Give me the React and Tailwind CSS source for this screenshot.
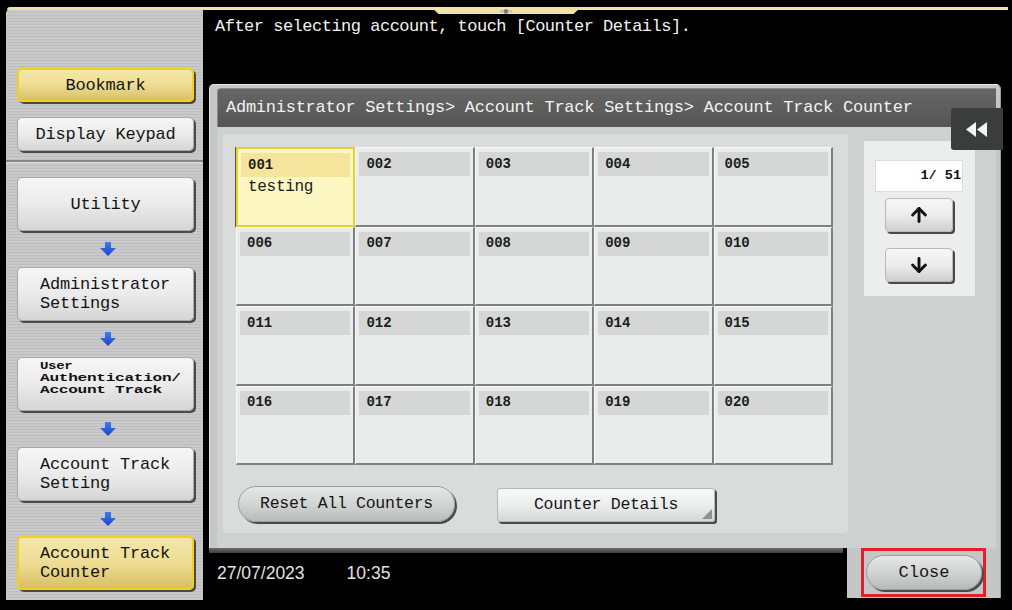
import React from "react";
import { ArrowUp, ArrowDown } from "lucide-react";

function SideBtn({ yellow, className = "", children }) {
  const skin = yellow
    ? "bg-linear-to-b from-[#f3e7a8] via-[#eedd93] to-[#d9c066] border-2 border-[#f0d21c]"
    : "bg-linear-to-b from-[#f6f6f6] via-[#ebebeb] to-[#d5d5d5] border border-[#a8a8a8]";
  return (
    <div
      className={`${skin} rounded-[5px] shadow-[2px_2px_0_#4a4a4a] text-[#141414] text-[17px] tracking-[-0.2px] leading-[19px] flex ${className}`}
    >
      {children}
    </div>
  );
}

function BlueArrow({ h = "h-[36px]" }) {
  return (
    <div className={`${h} flex items-center justify-center pl-[5px]`}>
      <svg width="16" height="14" viewBox="0 0 16 14">
        <defs>
          <linearGradient id="ba" x1="0" y1="0" x2="0" y2="1">
            <stop offset="0" stopColor="#3f7bf0" />
            <stop offset="1" stopColor="#1646c8" />
          </linearGradient>
        </defs>
        <path d="M5 0h6v6h5l-8 8-8-8h5z" fill="url(#ba)" />
      </svg>
    </div>
  );
}

function Sidebar() {
  return (
    <div className="ml-[6px] w-[197px] h-[590px] bg-[repeating-linear-gradient(180deg,#c9c9c9_0px,#c9c9c9_2px,#bebebe_2px,#bebebe_3px)] flex flex-col pl-[11px] pr-[9px] rounded-tl-[3px]">
      <div className="h-[58px] shrink-0" />
      <SideBtn yellow className="h-[34px] items-center justify-center shrink-0">
        Bookmark
      </SideBtn>
      <div className="h-[15px] shrink-0" />
      <SideBtn className="h-[34px] items-center justify-center shrink-0">
        Display Keypad
      </SideBtn>
      <div className="mt-[9px] -ml-[11px] -mr-[9px] h-[2px] bg-[#858585] shrink-0" />
      <div className="h-[1px] -ml-[11px] -mr-[9px] bg-[#dedede] shrink-0" />
      <div className="h-[14px] shrink-0" />
      <SideBtn className="h-[54px] items-center justify-center shrink-0">
        Utility
      </SideBtn>
      <BlueArrow />
      <SideBtn className="h-[54px] flex-col justify-center pl-[22px] shrink-0">
        <span>Administrator</span>
        <span>Settings</span>
      </SideBtn>
      <BlueArrow />
      <SideBtn className="h-[54px] flex-col pl-[22px] pt-[3px] shrink-0 overflow-hidden">
        <div className="origin-left scale-x-[1.4] font-bold tracking-[-0.2px] text-[#111]">
          <div className="text-[10px] leading-[11px]">User</div>
          <div className="text-[11.5px] leading-[11.5px]">Authentication/</div>
          <div className="text-[11.5px] leading-[11.5px]">Account Track</div>
        </div>
      </SideBtn>
      <BlueArrow />
      <SideBtn className="h-[54px] flex-col justify-center pl-[22px] shrink-0">
        <span>Account Track</span>
        <span>Setting</span>
      </SideBtn>
      <BlueArrow h="h-[35px]" />
      <SideBtn yellow className="h-[54px] flex-col justify-center pl-[21px] shrink-0">
        <span>Account Track</span>
        <span>Counter</span>
      </SideBtn>
    </div>
  );
}

function Cell({ n, sel }) {
  const skin = sel
    ? "bg-[#fdf7c2] border-2 border-[#e8cf30] shadow-[-1px_0_0_#555]"
    : "bg-[#e9eceb] border-solid border-t border-l border-r-2 border-b-2 border-t-[#f8f9f9] border-l-[#f8f9f9] border-r-[#7c807f] border-b-[#7c807f]";
  return (
    <div className={`${skin} flex flex-col`}>
      <div
        className={`mx-[3px] mt-[4px] h-[24px] ${
          sel ? "bg-[#f5e49c]" : "bg-[#d4d7d6]"
        } pl-[7px] flex items-center text-[14px] font-bold text-[#1c1c1c]`}
      >
        {n}
      </div>
      {sel && (
        <div className="pl-[10px] mt-[1px] text-[16px] leading-[18px] text-[#1a1a1a] tracking-[-0.3px]">
          testing
        </div>
      )}
    </div>
  );
}

function ArrowBtn({ up, className = "" }) {
  return (
    <div
      className={`w-[68px] h-[34px] rounded-[4px] bg-linear-to-b from-[#f7f7f7] via-[#ececec] to-[#cfcfcf] border border-[#b8b8b8] shadow-[2px_2px_0_#4a4a4a] flex items-center justify-center ${className}`}
    >
      {up ? (
        <ArrowUp size={22} strokeWidth={3.2} color="#111" />
      ) : (
        <ArrowDown size={22} strokeWidth={3.2} color="#111" />
      )}
    </div>
  );
}

export default function App() {
  const nums = Array.from({ length: 20 }, (_, i) => String(i + 1).padStart(3, "0"));
  return (
    <div className="w-[1012px] h-[610px] bg-black relative overflow-hidden pt-[7px] font-['Liberation_Mono',monospace]">
      {/* top yellow line */}
      <div className="h-[3px] ml-[7px] mr-[4px] bg-[#efe4a4] rounded-tl-[3px]" />
      <div className="absolute top-[7px] left-[431px] w-[150px] h-[7px] bg-[#efe4a4] [clip-path:polygon(0_0,100%_0,95%_100%,5%_100%)] flex items-center justify-center text-[6px] leading-none text-[#7a7a7a] font-['DejaVu_Sans',sans-serif]">
        «●»
      </div>

      <div className="flex h-[590px]">
        <Sidebar />
        <div className="ml-[6px] w-[803px] flex flex-col">
          {/* message */}
          <div className="h-[74px] pt-[7px] pl-[6px] text-[17px] leading-[20px] tracking-[-0.5px] text-[#f2f2f2]">
            After selecting account, touch [Counter Details].
          </div>

          {/* panel */}
          <div className="w-[792px] h-[514px] flex flex-col">
            <div className="bg-[#c3c7c6] rounded-t-[5px] pt-[3px] pl-[7px] pr-[4px] border-t border-l border-r border-[#e4e6e5] border-r-[#9a9e9d]">
              <div className="h-[39px] bg-linear-to-b from-[#666] to-[#555] rounded-tl-[4px] border-t border-l border-[#8a8a8a] flex items-center pl-[8px] text-[17px] tracking-[-0.25px] text-[#f2f2f2] whitespace-nowrap">
                Administrator Settings&gt; Account Track Settings&gt; Account Track Counter
              </div>
              <div className="h-[421px] bg-[#cdd1d0] flex items-start">
                <div className="ml-[6px] mt-[7px] w-[625px] h-[399px] bg-[#d9dcdb] rounded-[4px] pl-[13px] pt-[13px] flex flex-col">
                  <div className="grid grid-cols-[repeat(5,119.4px)] grid-rows-[repeat(4,79.5px)] w-[597px]">
                    {nums.map((n, i) => (
                      <Cell key={n} n={n} sel={i === 0} />
                    ))}
                  </div>
                  <div className="flex items-start mt-[21px]">
                    <div className="ml-[2px] w-[217px] h-[36px] rounded-full bg-linear-to-b from-[#e6e8e7] via-[#d2d5d4] to-[#b8bcbb] border border-[#9a9e9d] shadow-[2px_2px_0_#4a4a4a] flex items-center justify-center text-[16.5px] tracking-[-0.3px] text-[#151515]">
                      Reset All Counters
                    </div>
                    <div className="relative ml-[42px] mt-[2px] w-[218px] h-[34px] rounded-[3px] bg-linear-to-b from-[#f8f9f9] via-[#eceeed] to-[#d6d8d7] border border-[#b4b8b7] shadow-[2px_2px_0_#4a4a4a] flex items-center justify-center text-[16.5px] tracking-[-0.3px] text-[#151515]">
                      Counter Details
                      <svg
                        className="absolute right-[2px] bottom-[2px]"
                        width="10"
                        height="10"
                        viewBox="0 0 10 10"
                      >
                        <path d="M10 0V10H0z" fill="#8e9291" />
                      </svg>
                    </div>
                  </div>
                </div>

                <div className="ml-[16px] mt-[14px] w-[111px] h-[155px] bg-[#eceeed] flex flex-col items-start">
                  <div className="ml-[11px] mt-[19px] w-[88px] h-[32px] bg-white border border-[#dcdcdc] flex items-center justify-end pr-[1px] text-[13.5px] font-bold text-[#111] whitespace-pre">
                    1/ 51
                  </div>
                  <ArrowBtn up className="ml-[21px] mt-[6px]" />
                  <ArrowBtn className="ml-[21px] mt-[16px]" />
                </div>
              </div>
            </div>

            {/* bottom row */}
            <div className="flex h-[50px]">
              <div className="w-[638px] bg-black flex flex-col">
                <div className="h-[5px] w-[634px] bg-linear-to-b from-[#6a6d6c] to-[#3e4040]" />
                <div className="flex pl-[8px] pt-[10px] text-[17.5px] leading-[20px] text-[#e2e2e2] font-['Liberation_Sans',Arial,sans-serif]">
                  <span>27/07/2023</span>
                  <span className="ml-[42px]">10:35</span>
                </div>
              </div>
              <div className="w-[154px] h-[50px] bg-[#c3c7c6] border-r border-[#9a9e9d] pl-[14px]">
                <div className="w-[125px] h-[49px] border-[3px] border-[#e0202a] pl-[2px] pt-[4px]">
                  <div className="w-[116px] h-[35px] rounded-full bg-linear-to-b from-[#e6e8e7] via-[#d0d3d2] to-[#b6bab9] border border-[#9a9e9d] shadow-[2px_2px_0_#4a4a4a] flex items-center justify-center text-[17px] text-[#151515]">
                    Close
                  </div>
                </div>
              </div>
            </div>
          </div>
        </div>
      </div>

      {/* collapse tab */}
      <div className="absolute left-[951px] top-[108px] w-[52px] h-[42px] bg-[#3b3c3c] rounded-l-[3px] flex items-center justify-center">
        <svg width="22" height="15" viewBox="0 0 22 15">
          <path d="M10 0v15L0 7.5z" fill="#f4f4f4" />
          <path d="M21 0v15L11 7.5z" fill="#f4f4f4" />
        </svg>
      </div>
    </div>
  );
}
